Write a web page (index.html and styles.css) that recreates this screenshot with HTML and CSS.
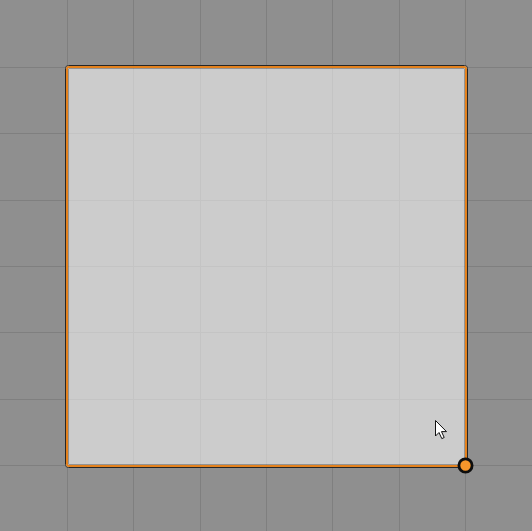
FILE: index.html
```html
<!DOCTYPE html>
<html>
<head>
<meta charset="utf-8">
<link rel="stylesheet" href="styles.css">
</head>
<body>
<div class="canvas">
<svg class="scene" width="532" height="531" viewBox="0 0 532 531" xmlns="http://www.w3.org/2000/svg">
  <rect class="bg" x="0" y="0" width="532" height="531"/>
  <g class="grid" shape-rendering="crispEdges">
    <line x1="67.5" y1="0" x2="67.5" y2="531"/>
    <line x1="133.5" y1="0" x2="133.5" y2="531"/>
    <line x1="200.5" y1="0" x2="200.5" y2="531"/>
    <line x1="266.5" y1="0" x2="266.5" y2="531"/>
    <line x1="332.5" y1="0" x2="332.5" y2="531"/>
    <line x1="399.5" y1="0" x2="399.5" y2="531"/>
    <line x1="465.5" y1="0" x2="465.5" y2="531"/>
    <line x1="0" y1="67.5" x2="532" y2="67.5"/>
    <line x1="0" y1="133.5" x2="532" y2="133.5"/>
    <line x1="0" y1="200.5" x2="532" y2="200.5"/>
    <line x1="0" y1="266.5" x2="532" y2="266.5"/>
    <line x1="0" y1="332.5" x2="532" y2="332.5"/>
    <line x1="0" y1="399.5" x2="532" y2="399.5"/>
    <line x1="0" y1="465.5" x2="532" y2="465.5"/>
  </g>
  <rect class="node-fill" x="65.5" y="65.5" width="402" height="402" rx="3"/>
  <g class="grid-inner" shape-rendering="crispEdges">
    <line x1="133.5" y1="68" x2="133.5" y2="465"/>
    <line x1="200.5" y1="68" x2="200.5" y2="465"/>
    <line x1="266.5" y1="68" x2="266.5" y2="465"/>
    <line x1="332.5" y1="68" x2="332.5" y2="465"/>
    <line x1="399.5" y1="68" x2="399.5" y2="465"/>
    <line x1="68" y1="133.5" x2="465" y2="133.5"/>
    <line x1="68" y1="200.5" x2="465" y2="200.5"/>
    <line x1="68" y1="266.5" x2="465" y2="266.5"/>
    <line x1="68" y1="332.5" x2="465" y2="332.5"/>
    <line x1="68" y1="399.5" x2="465" y2="399.5"/>
  </g>
  <rect class="node-inner" x="68.5" y="68.5" width="396" height="396" rx="1"/>
  <rect class="node-outline" x="65.5" y="65.5" width="402" height="402" rx="3"/>
  <rect class="node-sel" x="67" y="67" width="399" height="399" rx="2"/>
  <circle class="handle" cx="465.5" cy="465.5" r="6.6"/>
  <path class="cursor" d="M435.5 420.5 L435.5 436 L439 432.5 L441.8 438.6 L444.2 437.5 L441.5 431.6 L446.5 431.6 Z"/>
</svg>
</div>
</body>
</html>
```

FILE: styles.css
```css
html, body {
  margin: 0;
  padding: 0;
  background: #8f8f8f;
  overflow: hidden;
}
.canvas {
  width: 532px;
  height: 531px;
}
.scene {
  display: block;
}
.bg {
  fill: #8f8f8f;
}
.grid line {
  stroke: #7f7f7f;
  stroke-width: 1;
}
.grid-inner line {
  stroke: #c4c4c4;
  stroke-width: 1;
}
.node-fill {
  fill: #cccccc;
}
.node-inner {
  fill: none;
  stroke: rgba(40, 40, 40, 0.35);
  stroke-width: 1;
}
.node-outline {
  fill: none;
  stroke: #262626;
  stroke-width: 1;
}
.node-sel {
  fill: none;
  stroke: #e3811d;
  stroke-width: 2;
}
.handle {
  fill: #f7962b;
  stroke: #0d0d0d;
  stroke-width: 2.8;
}
.cursor {
  fill: #ffffff;
  stroke: #111111;
  stroke-width: 1;
  stroke-linejoin: miter;
}
```
